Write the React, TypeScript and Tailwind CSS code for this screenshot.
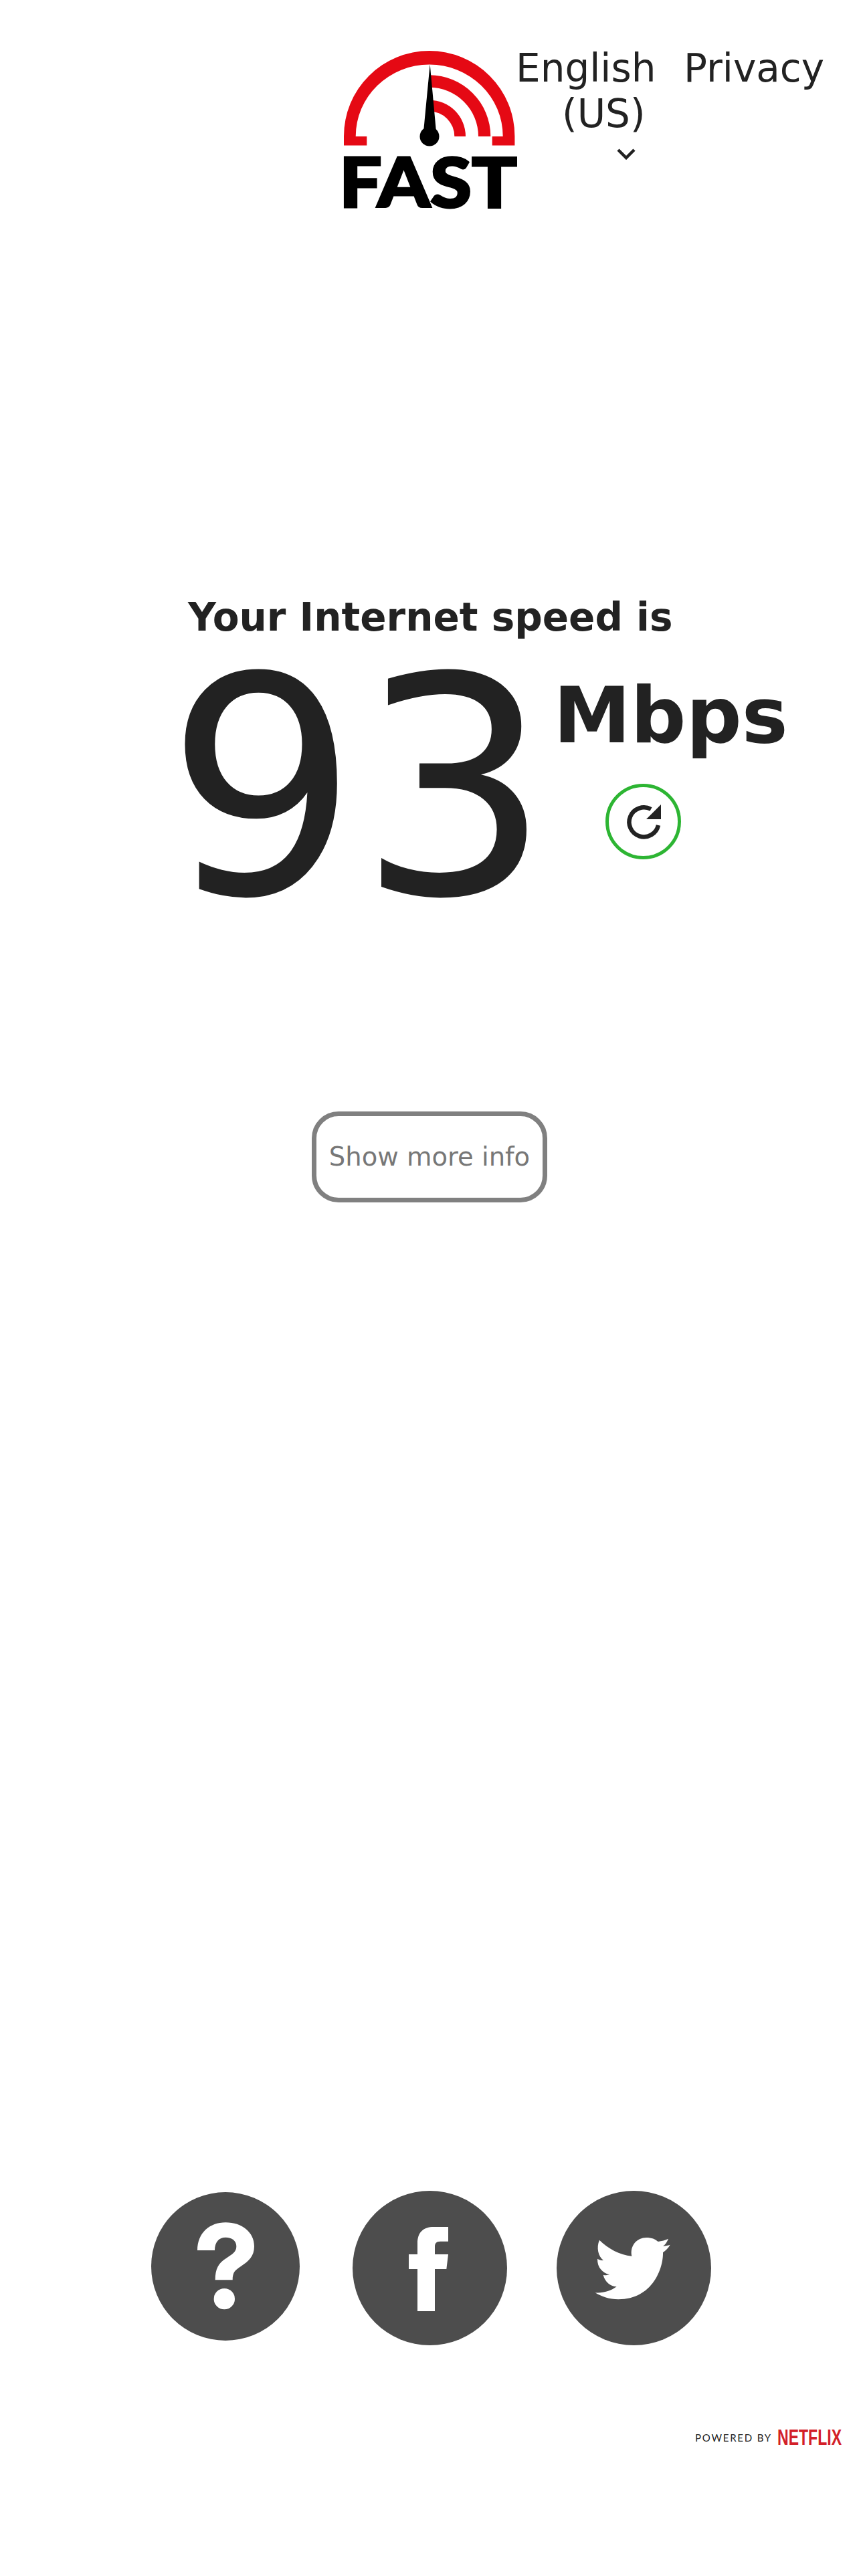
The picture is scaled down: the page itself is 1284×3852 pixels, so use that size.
const dejavu = { fontFamily: '"DejaVu Sans", sans-serif' };

function FastLogo() {
  return (
    <svg width="256" height="236" viewBox="0 0 256 236" className="block overflow-visible">
      <path
        fill="#e50914"
        d="M0 141.5V127.7A127.7 127.7 0 0 1 255.4 127.7V141.5H221.7V128H237.7A110 107.5 0 0 0 17.7 128H34.3V141.5Z"
      />
      <path fill="#e50914" d="M127.7 36.3A91.6 91.6 0 0 1 219.3 128H201A73.3 73.3 0 0 0 127.7 54.7Z" />
      <path fill="#e50914" d="M127.7 73.7A54.3 54.3 0 0 1 182 128H165.3A37.6 37.6 0 0 0 127.7 90.4Z" />
      <path fill="#000" d="M128.7 20.3L137.7 118H119.3Z" />
      <circle cx="128" cy="128" r="14.5" fill="#000" />
      <text
        x="-7"
        y="234"
        fill="#000"
        stroke="#000"
        strokeWidth="3"
        fontFamily="Lato, sans-serif"
        fontWeight="900"
        fontSize="103"
        textLength="266"
        lengthAdjust="spacingAndGlyphs"
      >
        FAST
      </text>
    </svg>
  );
}

function ReloadButton() {
  return (
    <button className="flex h-[113px] w-[113px] items-center justify-center rounded-full border-[5px] border-[#2db533]">
      <svg width="60" height="60" viewBox="0 0 60 60">
        <path d="M41 11A22 22 0 1 0 52 35" fill="none" stroke="#222" strokeWidth="6.5" />
        <path d="M56 4V26H34Z" fill="#222" />
      </svg>
    </button>
  );
}

function HelpIcon() {
  return (
    <svg width="222" height="222" viewBox="48 82 666 666">
      <circle cx="381" cy="415" r="333" fill="#4d4d4d" />
      <path
        fill="#fff"
        d="M255 343C255 265 310 218 382 218C455 218 510 262 510 325C510 370 485 392 450 415C425 432 413 440 413 476H335C335 425 350 400 385 378C412 360 430 350 430 325C430 300 410 285 382 285C352 285 333 305 333 343Z"
      />
      <circle cx="376" cy="561" r="47" fill="#fff" />
    </svg>
  );
}

function FacebookIcon() {
  return (
    <svg width="231" height="231" viewBox="951 75 693 693">
      <circle cx="1297.5" cy="421.5" r="346.5" fill="#4d4d4d" />
      <path
        fill="#fff"
        d="M1242 615V426H1203V360H1242V310C1242 260 1270 237 1315 237H1380V302H1345C1325 302 1320 312 1320 325V360H1380L1372 426H1320V615Z"
      />
    </svg>
  );
}

function TwitterIcon() {
  return (
    <svg width="231" height="231" viewBox="543 75 693 693">
      <circle cx="889.5" cy="421.5" r="346.5" fill="#4d4d4d" />
      <path
        fill="#fff"
        d="M735 296C775 335 825 362 880 368C870 320 905 285 945 285C970 285 985 292 998 303C1015 300 1030 297 1044 290C1038 305 1030 317 1020 323C1032 322 1043 320 1052 317C1045 330 1033 342 1020 352C1022 420 975 562 820 562C780 562 745 550 716 532C750 535 785 525 812 505C785 503 760 485 752 452C765 455 772 453 780 451C750 443 725 420 726 380C735 385 745 388 753 387C730 370 720 330 735 296Z"
      />
    </svg>
  );
}

export default function App() {
  return (
    <div className="flex min-h-[3852px] flex-col bg-white text-[#222]" style={dejavu}>
      {/* Header */}
      <header className="grid grid-cols-[514px_256px_1fr] pt-[76px]">
        <div />
        <a href="#">
          <FastLogo />
        </a>
        <nav className="flex text-[58px] leading-[68px] -mt-[8px]">
          <div className="w-[252px] shrink-0">
            <div className="pl-px">English</div>
            <div className="pl-[70px]">(US)</div>
            <svg width="28" height="17" viewBox="0 0 28 17" className="ml-[152px] mt-[18px]">
              <path d="M2 2L14 14L26 2" fill="none" stroke="#222" strokeWidth="4.5" />
            </svg>
          </div>
          <div>Privacy</div>
        </nav>
      </header>

      {/* Speed */}
      <main className="mt-[578px] flex flex-col">
        <h1 className="pl-[281px] text-[58px] font-bold leading-[66px] whitespace-nowrap">Your Internet speed is</h1>
        <div className="mt-[24px] flex pl-[248px]">
          <div className="text-[452px] leading-[400px]">93</div>
          <div className="flex flex-col pl-[4px] pt-[22px]">
            <div className="text-[116px] font-bold leading-[136px]">Mbps</div>
            <div className="ml-[78px] mt-[34px]">
              <ReloadButton />
            </div>
          </div>
        </div>
        <button className="mx-auto mt-[282px] flex h-[136px] w-[352px] items-center justify-center rounded-[40px] border-[7px] border-[#808080] text-[38.5px] text-[#777] whitespace-nowrap">
          Show more info
        </button>
      </main>

      {/* Social links */}
      <footer className="mt-auto">
        <div className="flex items-start pl-[226px]">
          <div className="mt-[2px]">
            <HelpIcon />
          </div>
          <div className="ml-[79px]">
            <FacebookIcon />
          </div>
          <div className="ml-[74px]">
            <TwitterIcon />
          </div>
        </div>
        <div className="mt-[125px] mb-[194px] flex items-center justify-end pr-[24px]">
          <span className="text-[15px] tracking-[0.12em] text-[#222]" style={{ fontFamily: "Lato, sans-serif" }}>
            POWERED BY
          </span>
          <svg width="100" height="26" viewBox="0 0 100 26" className="ml-[6px]">
            <text
              x="2"
              y="24"
              fill="#d32028"
              fontFamily='"Liberation Sans", sans-serif'
              fontWeight="700"
              fontSize="33"
              textLength="96"
              lengthAdjust="spacingAndGlyphs"
            >
              NETFLIX
            </text>
          </svg>
        </div>
      </footer>
    </div>
  );
}
